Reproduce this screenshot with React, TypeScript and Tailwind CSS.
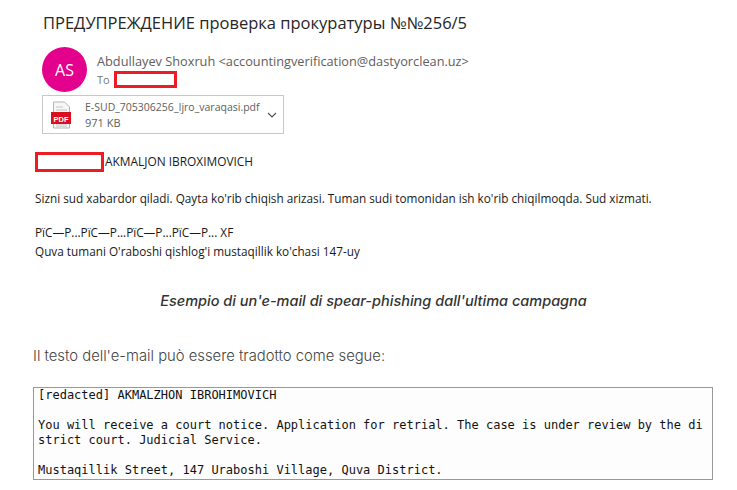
const App = () => {
  return (
    <div className="w-[737px] h-[490px] overflow-hidden bg-white font-['Open_Sans',sans-serif]">
      {/* Email screenshot */}
      <div className="pl-[42px] pt-[11px]">
        <h1 className="ml-px text-[16.5px] leading-[23px] text-[#262626] whitespace-nowrap">ПРЕДУПРЕЖДЕНИЕ проверка прокуратуры №№256/5</h1>
        <div className="flex mt-[13px]">
          <div className="w-[45px] h-[45px] rounded-full bg-[#e3008c] text-white text-[16px] flex items-center justify-center">AS</div>
          <div className="ml-[10px]">
            <div className="text-[12.75px] leading-[16px] mt-[6px] text-[#605e5c] whitespace-nowrap">Abdullayev Shoxruh &lt;accountingverification@dastyorclean.uz&gt;</div>
            <div className="flex items-center text-[11px] leading-[16px] text-[#777777] mt-[2px]">
              <span>To</span>
              <div className="ml-[4px] w-[63px] h-[17px] border-[3px] border-[#ed1c24] bg-white" />
            </div>
          </div>
        </div>
        <div className="flex items-center w-[242px] h-[39px] border border-[#c8c8c8] mt-[3px]">
          <svg className="ml-[7px]" width="22" height="28" viewBox="0 0 22 28">
            <path d="M3.5 1h11l5 5v21h-16z" fill="#f7f7f7" stroke="#b5b5b5" />
            <path d="M6 6h7M6 9h11M6 12h11M6 23h11M6 25h11" stroke="#c4c4c4" />
            <rect x="1" y="11" width="20" height="12" fill="#d70f1f" />
            <text x="11" y="20.5" textAnchor="middle" fontSize="7.5" fontWeight="700" fill="#fff" fontFamily="Liberation Sans">PDF</text>
          </svg>
          <div className="ml-[13px] flex-1 min-w-0">
            <div className="text-[10.5px] leading-[15px] text-[#605e5c] whitespace-nowrap">E-SUD_705306256_Ijro_varaqasi.pdf</div>
            <div className="text-[11px] leading-[15px] text-[#605e5c]">971 KB</div>
          </div>
          <svg className="mr-[6px]" width="10" height="6" viewBox="0 0 10 6" fill="none" stroke="#555" strokeWidth="1.2">
            <path d="M1 1l4 4 4-4" />
          </svg>
        </div>
      </div>
      <div className="pl-[35px] mt-[18px] text-[11.77px] text-[#1a1a1a]">
        <div className="flex items-center h-[20px]">
          <div className="w-[69px] h-[20px] border-[3px] border-[#ed1c24] bg-white" />
          <span className="ml-px text-[11.9px] whitespace-nowrap">AKMALJON IBROXIMOVICH</span>
        </div>
        <p className="mt-[18px] leading-[16px] whitespace-nowrap">Sizni sud xabardor qiladi. Qayta ko'rib chiqish arizasi. Tuman sudi tomonidan ish ko'rib chiqilmoqda. Sud xizmati.</p>
        <p className="mt-[18px] leading-[17px] whitespace-nowrap">PïC—P...PïC—P...PïC—P...PïC—P... XF</p>
        <p className="mt-[2px] leading-[16px] whitespace-nowrap">Quva tumani O'raboshi qishlog'i mustaqillik ko'chasi 147-uy</p>
      </div>
      {/* Article caption */}
      <p className="mt-[32px] pl-[10px] text-center text-[14.5px] leading-[20px] italic font-medium text-[#333333] font-['Inter',sans-serif]">Esempio di un'e-mail di spear-phishing dall'ultima campagna</p>
      <p className="mt-[34px] pl-[33px] text-[14.8px] leading-[22px] font-light text-[#444444] font-['Inter',sans-serif]">Il testo dell'e-mail può essere tradotto come segue:</p>
      {/* Translation box */}
      <pre className="ml-[33px] mt-[20px] w-[680px] h-[93px] border border-[#999999] bg-[#fdfdfd] pl-[4px] pr-[8px] text-[12px] leading-[15px] text-[#111111] overflow-hidden whitespace-pre-wrap break-all font-['DejaVu_Sans_Mono',monospace]">{`[redacted] AKMALZHON IBROHIMOVICH

You will receive a court notice. Application for retrial. The case is under review by the district court. Judicial Service.

Mustaqillik Street, 147 Uraboshi Village, Quva District.`}</pre>
    </div>
  );
};

export default App;
